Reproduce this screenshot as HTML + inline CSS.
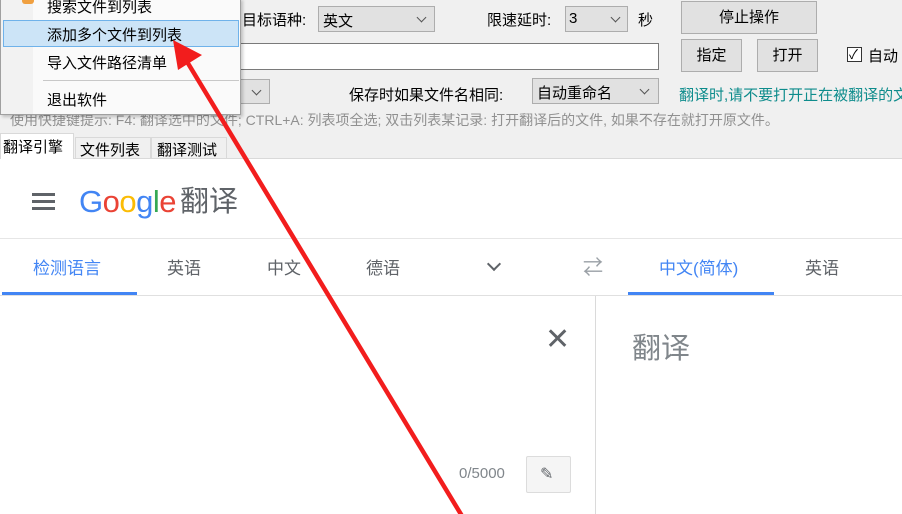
<!DOCTYPE html>
<html><head><meta charset="utf-8"><style>
*{margin:0;padding:0;box-sizing:border-box}
body{width:902px;height:514px;overflow:hidden;position:relative;background:#fff;font-family:"Liberation Sans","Noto Sans CJK SC",sans-serif;font-size:14px;color:#000}
.a{position:absolute;white-space:nowrap}
.top{position:absolute;left:0;top:0;width:902px;height:159px;background:#f0f0f0}
.sel{position:absolute;background:#e1e1e1;border:1px solid #adadad}
.btn{position:absolute;background:#e1e1e1;border:1px solid #adadad;text-align:center;font-size:15px}
.chev{position:absolute;width:7px;height:7px;border-right:1.3px solid #555;border-bottom:1.3px solid #555;transform:rotate(45deg)}
.g{color:#5f6368}
</style></head><body>
<div class="top"></div>
<!-- row1 -->
<div class="a" style="left:242px;top:9px;font-size:15px">目标语种:</div>
<div class="sel" style="left:318px;top:6px;width:117px;height:26px"><span class="a" style="left:4px;top:3px;font-size:15px">英文</span><div class="chev" style="left:99px;top:7px"></div></div>
<div class="a" style="left:487px;top:9px;font-size:15px">限速延时:</div>
<div class="sel" style="left:565px;top:6px;width:63px;height:26px"><span class="a" style="left:3px;top:3px;font-size:15px">3</span><div class="chev" style="left:46px;top:7px"></div></div>
<div class="a" style="left:638px;top:9px;font-size:15px">秒</div>
<div class="btn" style="left:681px;top:1px;width:136px;height:33px;line-height:31px">停止操作</div>
<!-- row2 -->
<div class="a" style="left:240px;top:43px;width:419px;height:27px;background:#fff;border:1px solid #7a7a7a"></div>
<div class="btn" style="left:681px;top:39px;width:61px;height:33px;line-height:31px">指定</div>
<div class="btn" style="left:757px;top:39px;width:61px;height:33px;line-height:31px">打开</div>
<div class="a" style="left:847px;top:47px;width:15px;height:15px;border:1px solid #333;background:#fff"></div>
<div class="a" style="left:849px;top:44px;font-size:13px">✓</div>
<div class="a" style="left:868px;top:45px;font-size:15px">自动</div>
<!-- row3 -->
<div class="sel" style="left:236px;top:79px;width:34px;height:25px"><div class="chev" style="left:16px;top:7px"></div></div>
<div class="a" style="left:349px;top:84px;font-size:15px">保存时如果文件名相同:</div>
<div class="sel" style="left:532px;top:78px;width:127px;height:26px"><span class="a" style="left:4px;top:3px;font-size:15px">自动重命名</span><div class="chev" style="left:108px;top:7px"></div></div>
<div class="a" style="left:679px;top:84px;font-size:15px;color:#0e8c8c">翻译时,请不要打开正在被翻译的文件</div>
<div class="a" style="left:10px;top:110px;font-size:14px;color:#909090">使用快捷键提示: F4: 翻译选中的文件; CTRL+A: 列表项全选; 双击列表某记录: 打开翻译后的文件, 如果不存在就打开原文件。</div>
<!-- tabs -->
<div class="a" style="left:0;top:158px;width:902px;height:1px;background:#d9d9d9"></div>
<div class="a" style="left:0;top:133px;width:74px;height:26px;background:#fff;border:1px solid #d9d9d9;border-bottom:none"></div>
<div class="a" style="left:3px;top:136px;font-size:15px">翻译引擎</div>
<div class="a" style="left:75px;top:137px;width:76px;height:22px;border:1px solid #d9d9d9;background:#f0f0f0"></div>
<div class="a" style="left:80px;top:139px;font-size:15px">文件列表</div>
<div class="a" style="left:151px;top:137px;width:76px;height:22px;border:1px solid #d9d9d9;background:#f0f0f0"></div>
<div class="a" style="left:157px;top:139px;font-size:15px">翻译测试</div>
<!-- google -->
<div class="a" style="left:32px;top:193px;width:23px;height:3px;background:#5f6368;box-shadow:0 7px 0 #5f6368,0 14px 0 #5f6368"></div>
<div class="a" style="left:79px;top:184px;font-size:31px;line-height:36px;letter-spacing:-0.5px"><span style="color:#4285f4">G</span><span style="color:#ea4335">o</span><span style="color:#fbbc05">o</span><span style="color:#4285f4">g</span><span style="color:#34a853">l</span><span style="color:#ea4335">e</span></div>
<div class="a g" style="left:180px;top:184px;font-size:29px;line-height:36px">翻译</div>
<div class="a" style="left:0;top:238px;width:902px;height:1px;background:#e6e6e6"></div>
<div class="a" style="left:33px;top:254px;font-size:17px;color:#4285f4">检测语言</div>
<div class="a g" style="left:167px;top:254px;font-size:17px">英语</div>
<div class="a g" style="left:267px;top:254px;font-size:17px">中文</div>
<div class="a g" style="left:366px;top:254px;font-size:17px">德语</div>
<div class="chev" style="left:489px;top:259px;width:10px;height:10px;border-width:2px;border-color:#5f6368"></div>
<div class="a g" style="left:583px;top:251px;font-size:20px;color:#9aa0a6">⇄</div>
<div class="a" style="left:659px;top:254px;font-size:17px;color:#4285f4">中文(简体)</div>
<div class="a g" style="left:805px;top:254px;font-size:17px">英语</div>
<div class="a" style="left:2px;top:292px;width:135px;height:3px;background:#4285f4"></div>
<div class="a" style="left:628px;top:292px;width:146px;height:3px;background:#4285f4"></div>
<div class="a" style="left:0;top:295px;width:902px;height:1px;background:#e0e0e0"></div>
<div class="a" style="left:595px;top:296px;width:1px;height:218px;background:#dadada"></div>
<div class="a g" style="left:545px;top:322px;font-size:30px;font-weight:300">✕</div>
<div class="a" style="left:632px;top:325px;font-size:29px;color:#80868b">翻译</div>
<div class="a" style="left:459px;top:465px;font-size:15px;color:#80868b">0/5000</div>
<div class="a" style="left:526px;top:456px;width:45px;height:37px;background:#f5f5f5;border:1px solid #dcdcdc;border-radius:2px"></div>
<div class="a g" style="left:540px;top:464px;font-size:16px">✎</div>
<!-- menu -->
<div class="a" style="left:0;top:-2px;width:241px;height:117px;background:#f2f2f2;border:1px solid #a0a0a0;box-shadow:2px 2px 3px rgba(0,0,0,.2)"></div>
<div class="a" style="left:33px;top:0;width:207px;height:114px;background:#fafafa"></div>
<div class="a" style="left:3px;top:20px;width:236px;height:27px;background:#cce4f7;border:1px solid #6fb2ea"></div>
<div class="a" style="left:22px;top:0;width:12px;height:4px;background:#f0a040;border-radius:0 0 3px 3px"></div>
<div class="a" style="left:47px;top:-4px;font-size:15px">搜索文件到列表</div>
<div class="a" style="left:47px;top:24px;font-size:15px">添加多个文件到列表</div>
<div class="a" style="left:47px;top:52px;font-size:15px">导入文件路径清单</div>
<div class="a" style="left:43px;top:80px;width:196px;height:1px;background:#c8c8c8"></div>
<div class="a" style="left:47px;top:89px;font-size:15px">退出软件</div>
<!-- arrow -->
<svg class="a" style="left:0;top:0" width="902" height="514"><line x1="186" y1="60" x2="462" y2="516" stroke="#f21d1d" stroke-width="4.5"/><polygon points="173,40 202,55 178,70" fill="#f21d1d"/></svg>
</body></html>
